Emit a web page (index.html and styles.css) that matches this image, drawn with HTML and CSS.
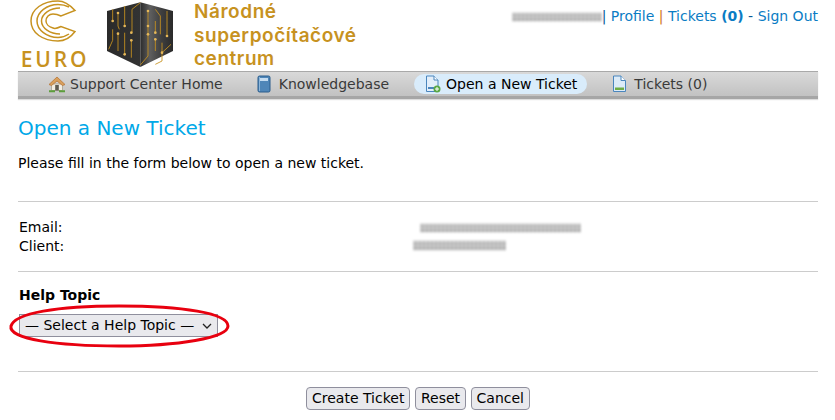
FILE: index.html
```html
<!DOCTYPE html>
<html lang="en">
<head>
<meta charset="utf-8">
<title>Open a New Ticket</title>
<link rel="stylesheet" href="styles.css">
</head>
<body>
<div class="container">
  <header class="header">
    <div class="logo-euro">
      <svg class="logo-c" width="50" height="42" viewBox="0 0 50 42" fill="none" stroke="#c7921f" stroke-width="1.500">
        <path d="M47 10.500 C41 4 36 1 30 1 C15 1 3 9 3 21 C3 33 15 41 30 41 C37 41 43 37 47 31.500 L33 26.500 C30 28 27 29 25 28 C21 27 18 24 18 21 C18 17 21 14 25 14 C28 14 31 15 33 16 Z"/>
        <path d="M41 7 C37 5 33 4.500 30 4.500 C19 4.500 9 12 9 21 C9 30 19 37.500 30 37.500 C34 37.500 38 36 41 34"/>
        <path d="M32 8 C22 8 13.500 14 13.500 21 C13.500 28 22 34 32 34"/>
      </svg>
      <span class="euro-text">EURO</span>
    </div>
    <svg class="logo-cube" width="66" height="66" viewBox="5 0 198 198">
      <defs>
        <linearGradient id="faceL" x1="0" x2="1" y1="0" y2="0"><stop offset="0" stop-color="#2a2a2a"/><stop offset="1" stop-color="#333"/></linearGradient>
        <linearGradient id="faceR" x1="0" x2="1" y1="0" y2="0"><stop offset="0" stop-color="#2c2c2c"/><stop offset=".3" stop-color="#5e5e5e"/><stop offset=".65" stop-color="#3e3e3e"/><stop offset="1" stop-color="#2a2a2a"/></linearGradient>
      </defs>
      <path d="M5 30 L105 4 V198 L5 150 Z" fill="url(#faceL)"/>
      <path d="M105 4 L203 30 V150 L105 198 Z" fill="url(#faceR)"/>
      <g fill="none" stroke="#c7921f" stroke-width="2.600">
        <path d="M22 25 V60 M38 35 V75 L42 85 M58 15 V75 M105 5 L80 25 V95 M22 85 V118 L10 145 M38 98 V150 M58 95 V160 M78 118 V170"/>
        <path d="M128 30 V120 M150 25 L165 45 V100 M150 60 V95 M185 30 V105 M150 115 V150 M170 125 V180 L150 190 M128 120 V165 L105 192 M197 130 L170 155"/>
      </g>
      <g fill="#e6b85a">
        <circle cx="22" cy="60" r="4"/><circle cx="38" cy="36" r="4"/><circle cx="58" cy="75" r="4"/><circle cx="78" cy="95" r="4"/><circle cx="38" cy="98" r="4"/><circle cx="58" cy="160" r="4"/><circle cx="78" cy="118" r="4"/><circle cx="128" cy="30" r="4"/><circle cx="128" cy="75" r="4"/><circle cx="128" cy="100" r="4"/><circle cx="150" cy="95" r="4"/><circle cx="185" cy="105" r="4"/><circle cx="150" cy="115" r="4"/><circle cx="170" cy="155" r="4"/>
      </g>
    </svg>
    <div class="brand">Národné<br>superpočítačové<br>centrum</div>
    <div class="userbar">
      <span class="smudge smudge-user"></span><span class="sep">|</span>
      <a href="#">Profile</a> <span class="sep alt">|</span>
      <a href="#">Tickets <b>(0)</b></a> - <a href="#">Sign Out</a>
    </div>
  </header>

  <nav class="nav">
    <a class="nav-item item-home" href="#">
      <svg width="18" height="18" viewBox="0 0 18 18"><path d="M3.500 9 H14.500 V15.500 H3.500 Z" fill="#f2ede2" stroke="#a8a08c" stroke-width=".8"/><path d="M9 2 L17 9.500 L14.500 10.500 L9 6 L3.500 10.500 L1 9.500 Z" fill="#d9a05c" stroke="#b8763a" stroke-width=".8"/><rect x="7.200" y="10" width="3.600" height="5.500" fill="#5e5a50"/><path d="M1 16.300 H7 M11 16.300 H17" stroke="#5c9e3c" stroke-width="2"/></svg>
      Support Center Home
    </a>
    <a class="nav-item item-kb" href="#">
      <svg width="14" height="18" viewBox="0 0 14 18"><rect x="1" y="1" width="12" height="16" rx="1.500" fill="#4f86b8" stroke="#2a5c8c"/><rect x="3" y="3" width="8" height="3" fill="#c5dcf0"/><path d="M2.500 2 V16" stroke="#8db6da"/></svg>
      Knowledgebase
    </a>
    <a class="nav-item item-new" href="#">
      <svg width="16" height="18" viewBox="0 0 16 18"><path d="M1.500 1 H9 L13 5 V16.500 H1.500 Z" fill="#e2eefa" stroke="#4a86bd"/><path d="M9 1 V5 H13" fill="#fff" stroke="#4a86bd"/><path d="M3 13 H10" stroke="#4a86bd" stroke-width="2"/><circle cx="12" cy="14" r="3.500" fill="#5aa845"/><path d="M10 14 H14 M12 12 V16" stroke="#fff"/></svg>
      Open a New Ticket
    </a>
    <a class="nav-item item-tickets" href="#">
      <svg width="15" height="18" viewBox="0 0 15 18"><path d="M1.500 1 H9 L13.500 5.500 V16.500 H1.500 Z" fill="#dcebf8" stroke="#4a86bd"/><path d="M9 1 V5.500 H13.500" fill="#fff" stroke="#4a86bd"/><rect x="3" y="12.500" width="9" height="2.500" fill="#6fae45"/></svg>
      Tickets (0)
    </a>
  </nav>

  <main class="content">
    <h1 class="title">Open a New Ticket</h1>
    <p class="intro">Please fill in the form below to open a new ticket.</p>
    <hr class="rule rule-first">
    <div class="info">
      <div class="info-row"><span class="info-label">Email:</span><span class="smudge smudge-email"></span></div>
      <div class="info-row"><span class="info-label">Client:</span><span class="smudge smudge-client"></span></div>
    </div>
    <hr class="rule rule-second">
    <form class="form">
      <label class="field-label" for="topic">Help Topic</label>
      <div class="select-wrap">
        <select class="topic" id="topic"><option>— Select a Help Topic —</option></select>
        <svg class="ring" width="224" height="46" viewBox="0 0 224 46"><path d="M4 23 C8 10 50 3 112 3 C175 3 221 10 221 23 C221 35 170 43 112 43 C50 43 1 36 4 23 Z" fill="none" stroke="#e8000f" stroke-width="3"/></svg>
      </div>
      <hr class="rule rule-third">
      <div class="actions">
        <button type="button">Create Ticket</button>
        <button type="button">Reset</button>
        <button type="button">Cancel</button>
      </div>
    </form>
  </main>
</div>
</body>
</html>
```
FILE: styles.css
```css
* { box-sizing: border-box; }
html, body { margin: 0; padding: 0; height: 420px; overflow: hidden; background: #fff; }
body { font-family: "DejaVu Sans", sans-serif; font-size: 14px; color: #000; }
.container { width: 800px; margin-left: 18px; }

.header { height: 71px; display: flex; align-items: flex-start; position: relative; }
.logo-euro { width: 70px; display: flex; flex-direction: column; align-items: center; }
.logo-c { margin-top: 0; margin-left: 0; }
.euro-text { font-family: "Open Sans", sans-serif; font-weight: 600; font-size: 21px; line-height: 22px; letter-spacing: 2.800px; color: #c7921f; margin-top: 6px; margin-left: 4px; }
.logo-cube { margin-left: 19px; margin-top: 1px; }
.brand { margin-left: 21px; margin-top: 0; font-family: "Inter", sans-serif; font-weight: 600; font-size: 19px; line-height: 23.500px; letter-spacing: .55px; color: #c7921f; }
.userbar { margin-left: auto; margin-top: 7px; line-height: 18px; color: #0a5a96; white-space: nowrap; }
.userbar a { color: #0a7cc4; text-decoration: none; }
.sep { color: #0a5a96; }
.sep.alt { color: #d0741a; }

.smudge { display: inline-block; background: repeating-linear-gradient(90deg, rgba(255,255,255,.18) 0 2px, transparent 2px 4px), linear-gradient(#e8e8e8, #b0b0b0 30%, #c4c4c4 55%, #a8a8a8 75%, #eee); filter: blur(1px); }
.smudge-user { width: 90px; height: 10px; vertical-align: -1px; }

.nav { height: 28px; background: linear-gradient(#d9d9d9, #c2c2c2); border-top: 1px solid #a9a9a9; border-bottom: 3px solid #a6a6a6; display: flex; align-items: center; box-shadow: 0 1px 1px #ddd; }
.nav-item { display: flex; align-items: center; gap: 4px; height: 20px; color: #3a3a3a; text-decoration: none; white-space: nowrap; }
.item-home { margin-left: 30px; }
.item-kb { margin-left: 34px; gap: 8px; }
.item-new { margin-left: 25px; background: #d9ecfb; color: #000; border-radius: 10px; padding: 0 10px 0 11px; gap: 5px; }
.item-tickets { margin-left: 25px; gap: 7px; }

.content { padding: 0; }
.title { margin: 17px 0 0; font-size: 20px; line-height: 24px; font-weight: 400; color: #00a8e8; }
.intro { margin: 14px 0 0; line-height: 18px; }
.rule { border: 0; height: 1px; background: #ccc; margin: 0; }
.rule-first { margin-top: 29px; }
.info { margin-top: 16px; padding-left: 1px; }
.info-row { height: 19px; line-height: 19px; display: flex; align-items: center; }
.info-label { width: 401px; }
.smudge-email { width: 161px; height: 10px; }
.smudge-client { width: 93px; height: 11px; margin-left: -7px; margin-top: -2px; }
.rule-second { margin-top: 15px; }
.field-label { display: block; margin: 14px 0 0 1px; font-weight: 700; line-height: 18px; }
.select-wrap { position: relative; margin: 10px 0 0 1px; height: 23px; }
.topic { appearance: none; width: 199px; height: 23px; font: 14px "DejaVu Sans", sans-serif; background: #e9e9ed url("data:image/svg+xml,%3Csvg xmlns='http://www.w3.org/2000/svg' width='10' height='6'%3E%3Cpath d='M1 1 L5 5 L9 1' fill='none' stroke='%23222' stroke-width='1.300'/%3E%3C/svg%3E") no-repeat 182px 8px; border: 1px solid #8f8f9d; color: #000; border-radius: 0; padding: 0 20px 2px 5px; }
.ring { position: absolute; left: -12px; top: -11px; pointer-events: none; }
.rule-third { margin-top: 34px; }
.actions { margin-top: 15px; display: flex; justify-content: center; gap: 4.500px; }
.actions button { font: 14px "DejaVu Sans", sans-serif; height: 23px; padding: 0 5px 1px; background: #e9e9ed; border: 1px solid #8f8f9d; border-radius: 4px; color: #000; }
```
